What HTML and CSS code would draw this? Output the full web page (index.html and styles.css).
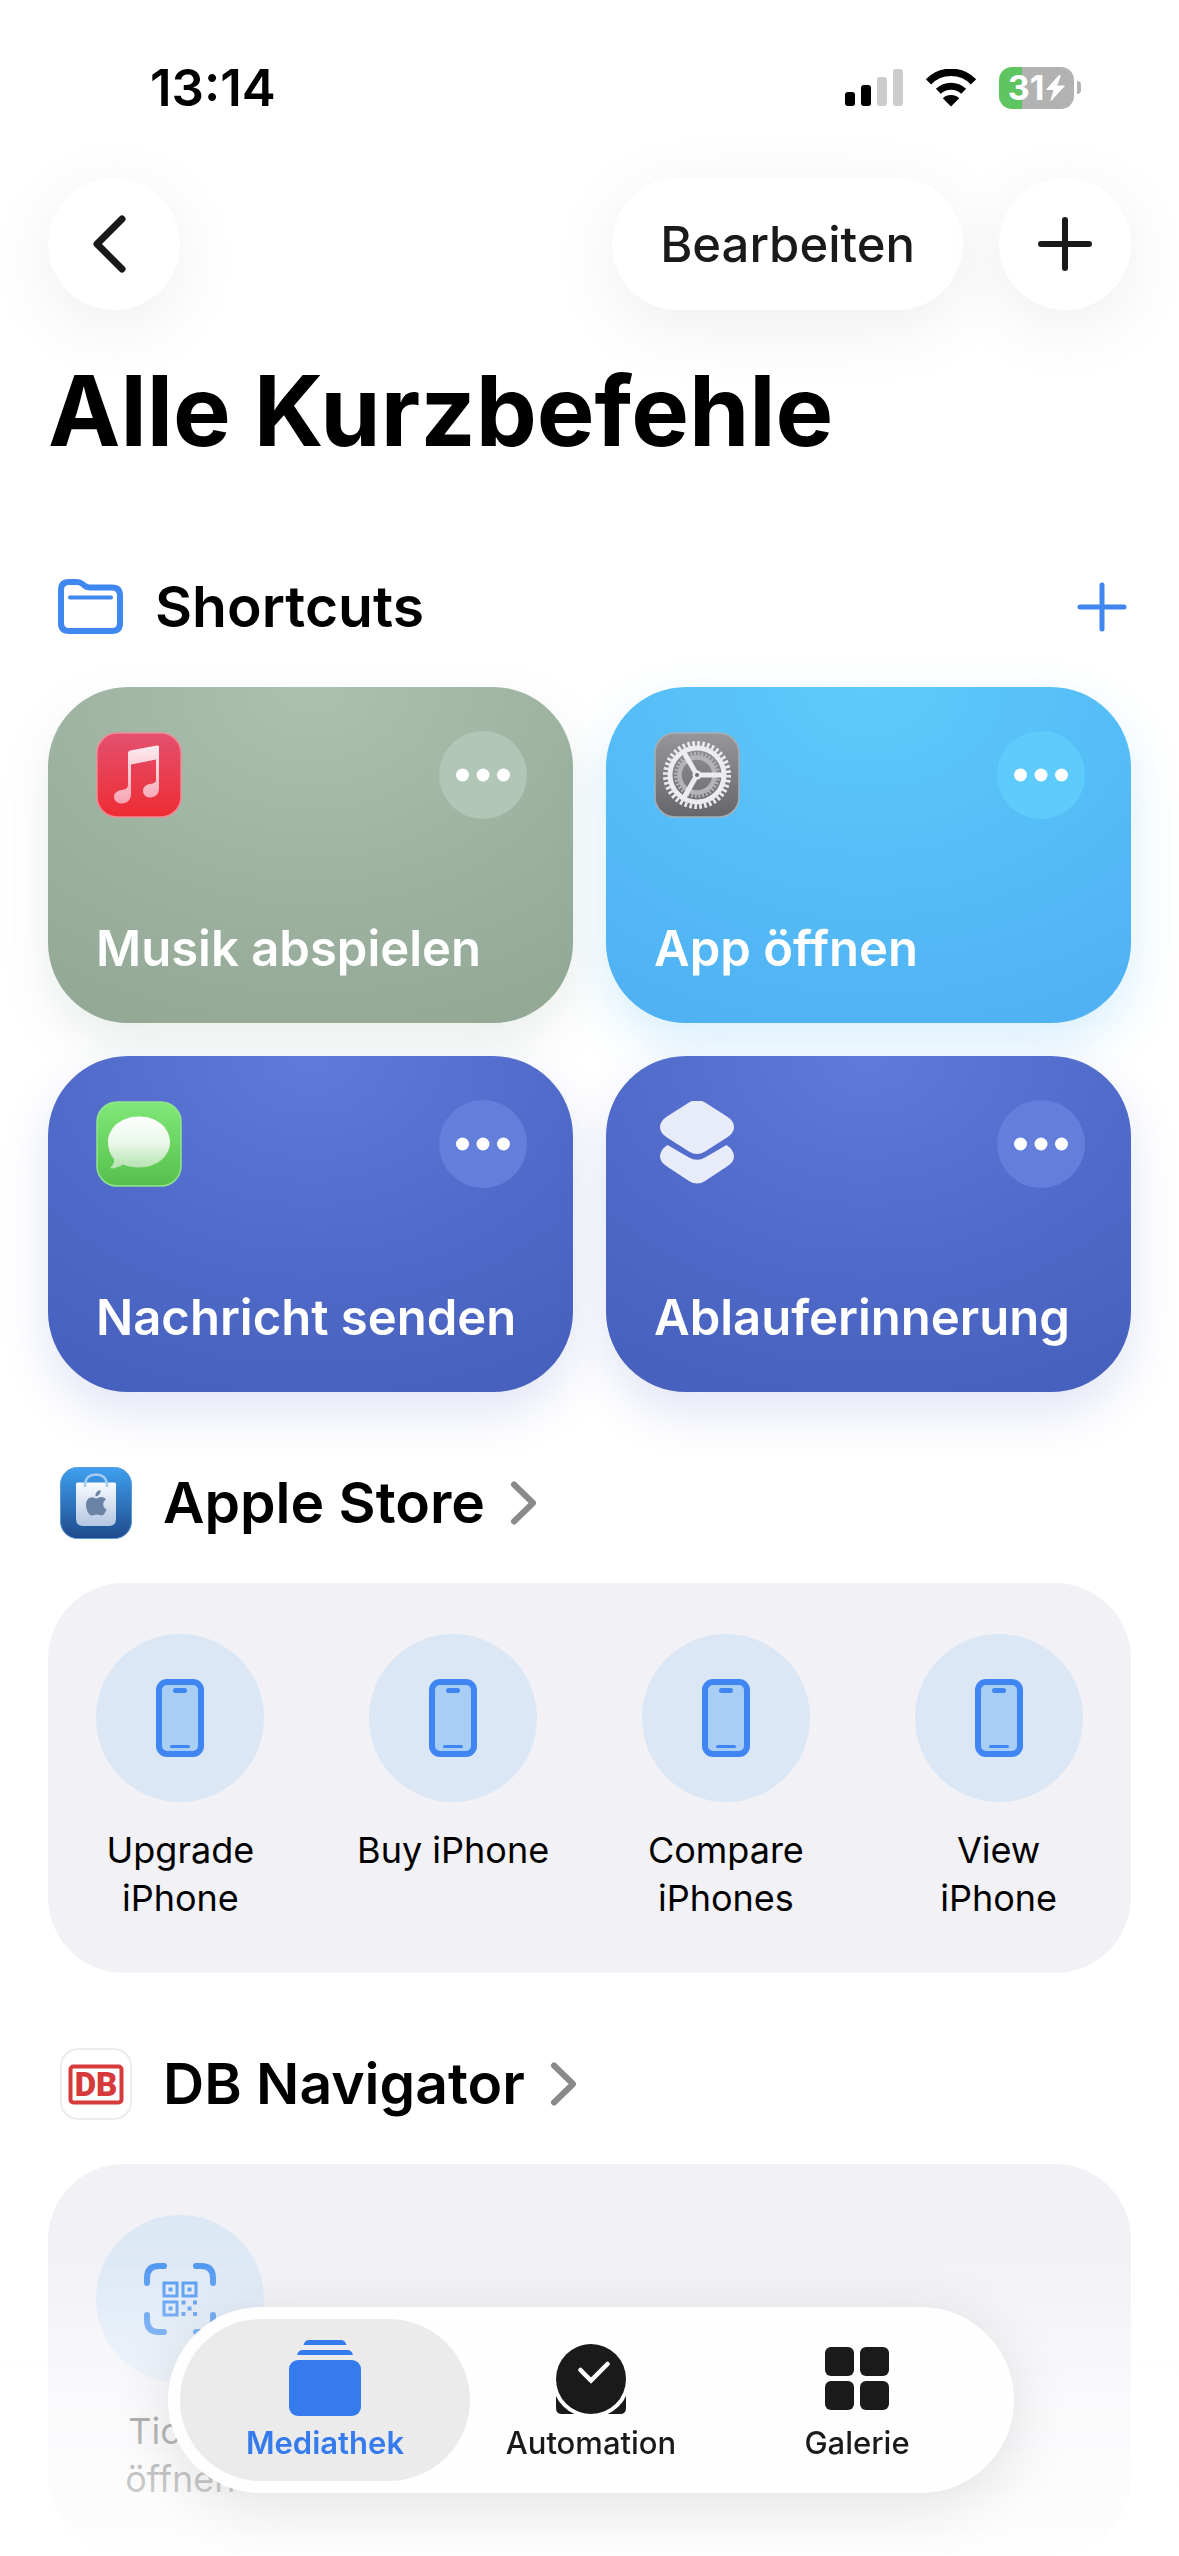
FILE: index.html
```html
<!DOCTYPE html>
<html lang="de">
<head>
<meta charset="utf-8">
<meta name="viewport" content="width=device-width, initial-scale=1">
<title>Alle Kurzbefehle</title>
<link rel="stylesheet" href="styles.css">
</head>
<body>
<svg class="defs" aria-hidden="true">
  <defs>
    <symbol id="phone" viewBox="0 0 48 78">
      <rect x="3" y="3" width="42" height="72" rx="8" fill="#a9cef6" stroke="#3f86f3" stroke-width="6"/>
      <rect x="17" y="9" width="14" height="5" rx="2.500" fill="#3f86f3"/>
      <rect x="14" y="66" width="20" height="3" rx="1.500" fill="#3f86f3"/>
    </symbol>
    <symbol id="chevron" viewBox="0 0 28 46">
      <path d="M4 4.500 23 23 4 41.500" fill="none" stroke="#8a8a8c" stroke-width="6" stroke-linecap="round" stroke-linejoin="round"/>
    </symbol>
    <symbol id="dots" viewBox="0 0 56 16">
      <circle cx="7.500" cy="8" r="6.500"/><circle cx="28" cy="8" r="6.500"/><circle cx="48.500" cy="8" r="6.500"/>
    </symbol>
  </defs>
</svg>

<header class="status">
  <time class="clock">13:14</time>
  <div class="indicators">
    <svg width="58" height="38" viewBox="0 0 58 38" aria-label="Mobilfunk">
      <rect x="0" y="23" width="10" height="14" rx="3"/>
      <rect x="16" y="16" width="10" height="21" rx="3"/>
      <rect x="32" y="8" width="10" height="29" rx="3" fill="#cbcbcb"/>
      <rect x="48" y="0" width="10" height="37" rx="3" fill="#cbcbcb"/>
    </svg>
    <svg width="52" height="38" viewBox="0 0 52 38" aria-label="WLAN">
      <path d="M26 37.500 17.800 29.300A12 12 0 0 1 34.200 29.300Z"/>
      <path d="M13.300 22.300A18.500 18.500 0 0 1 38.700 22.300" fill="none" stroke="#000" stroke-width="7"/>
      <path d="M3.500 12.800A31.500 31.500 0 0 1 48.500 12.800" fill="none" stroke="#000" stroke-width="7.500"/>
    </svg>
    <div class="battery">
      <span>31</span>
      <svg width="19" height="26" viewBox="0 0 19 26" aria-hidden="true"><path d="M13 0.500 0.800 14.500h7.400L5 25.500 18.400 11H10.500L14.300 1Z" fill="#fff" stroke="#fff" stroke-linejoin="round"/></svg>
    </div>
  </div>
</header>

<nav class="toolbar" aria-label="Werkzeuge">
  <button class="glass round back" aria-label="Zurück">
    <svg width="34" height="58" viewBox="0 0 34 58"><path d="M30 4 5 29 30 54" fill="none" stroke="#1a1a1a" stroke-width="7" stroke-linecap="round" stroke-linejoin="round"/></svg>
  </button>
  <button class="glass edit">Bearbeiten</button>
  <button class="glass round" aria-label="Neuer Kurzbefehl">
    <svg width="54" height="54" viewBox="0 0 54 54"><path d="M27 3V51M3 27H51" stroke="#1a1a1a" stroke-width="6" stroke-linecap="round"/></svg>
  </button>
</nav>

<main>
  <h1>Alle Kurzbefehle</h1>

  <section>
    <div class="section-head first">
      <svg width="66" height="56" viewBox="0 0 66 56" aria-hidden="true">
        <path d="M3 11Q3 3 11 3H19Q22 3 24.500 5L27 7Q29 8.500 32 8.500H54Q62 8.500 62 16.500V44Q62 52 54 52H11Q3 52 3 44Z" fill="none" stroke="#4087ef" stroke-width="6"/>
        <path d="M12 18.500H53" stroke="#4087ef" stroke-width="4" stroke-linecap="round"/>
      </svg>
      <h2>Shortcuts</h2>
      <button class="add" aria-label="Hinzufügen">
        <svg width="50" height="50" viewBox="0 0 50 50"><path d="M25 3V47M3 25H47" stroke="#3f86f0" stroke-width="5" stroke-linecap="round"/></svg>
      </button>
    </div>

    <div class="cards">
      <article class="card sage">
        <div class="card-top">
          <svg class="app" viewBox="0 0 86 86" aria-hidden="true">
            <defs>
              <linearGradient id="gm" x2="0" y2="1"><stop offset="0" stop-color="#e4506f"/><stop offset="1" stop-color="#ee2c33"/></linearGradient>
              <linearGradient id="gn" x2="0" y2="1"><stop offset="0" stop-color="#fdeaf0"/><stop offset="1" stop-color="#f7a5b2"/></linearGradient>
            </defs>
            <rect x="1" y="1" width="84" height="84" rx="20" fill="url(#gm)" stroke="#f08b96" stroke-width="1.500"/>
            <path fill="url(#gn)" d="M32 21Q32 19 34 18.500L61 13.500Q63 13 63 15V56C63 62 59.500 65.500 54 65.500C49.500 65.500 47 62.500 47 59C47 55 50 52.500 54 52C58 51.500 60 50.500 60 47V27.500L35 32.500V62C35 68 31 71.500 26 71.500C21 71.500 18 68.500 18 65C18 61 21.500 58.500 25.500 58C30 57.500 32 56 32 52.500Z"/>
          </svg>
          <button class="more" aria-label="Musik abspielen bearbeiten"><svg width="56" height="16"><use href="#dots"/></svg></button>
        </div>
        <a href="#musik">Musik abspielen</a>
      </article>

      <article class="card sky">
        <div class="card-top">
          <svg class="app" viewBox="0 0 86 86" aria-hidden="true">
            <defs>
              <linearGradient id="gs" x2="0" y2="1"><stop offset="0" stop-color="#96969b"/><stop offset="1" stop-color="#66666a"/></linearGradient>
            </defs>
            <rect x="1" y="1" width="84" height="84" rx="20" fill="url(#gs)" stroke="#a9adb2" stroke-width="1.500"/>
            <g fill="none" stroke="#b4b4b7">
              <circle cx="43" cy="43" r="17.500" stroke-width="4.500"/>
              <circle cx="43" cy="43" r="21" stroke-width="4" stroke-dasharray="1.900 1.768"/>
            </g>
            <g fill="none" stroke="#ececee">
              <circle cx="43" cy="43" r="27" stroke-width="5"/>
              <circle cx="43" cy="43" r="31.500" stroke-width="5" stroke-dasharray="2.600 2.348"/>
              <path d="M43 43H69M43 43 30 20.500M43 43 30 65.500" stroke-width="5"/>
            </g>
            <circle cx="43" cy="43" r="4.500" fill="#ececee"/><circle cx="43" cy="43" r="2" fill="#6f6f73"/>
          </svg>
          <button class="more" aria-label="App öffnen bearbeiten"><svg width="56" height="16"><use href="#dots"/></svg></button>
        </div>
        <a href="#app">App öffnen</a>
      </article>

      <article class="card indigo">
        <div class="card-top">
          <svg class="app" viewBox="0 0 86 86" aria-hidden="true">
            <defs>
              <linearGradient id="gg" x2="0" y2="1"><stop offset="0" stop-color="#7fe878"/><stop offset="1" stop-color="#57c04c"/></linearGradient>
              <linearGradient id="gb" x2="0" y2="1"><stop offset="0" stop-color="#fff"/><stop offset=".5" stop-color="#eaf7e9"/><stop offset="1" stop-color="#b4e3af"/></linearGradient>
            </defs>
            <rect x="1" y="1" width="84" height="84" rx="20" fill="url(#gg)" stroke="#93e58d" stroke-width="1.500"/>
            <path fill="url(#gb)" d="M43 15.500C60.500 15.500 74 26.500 74 41S60.500 66.500 43 66.500C37 66.500 31.500 65.500 27 63.500C23 66 19.500 67.300 15.500 67.500C14.500 67.500 14.500 66.500 15 66C17.500 63.500 18.500 60.500 18 58C14 53.500 12 48 12 41C12 26.500 25.500 15.500 43 15.500Z"/>
          </svg>
          <button class="more" aria-label="Nachricht senden bearbeiten"><svg width="56" height="16"><use href="#dots"/></svg></button>
        </div>
        <a href="#nachricht">Nachricht senden</a>
      </article>

      <article class="card indigo">
        <div class="card-top">
          <svg class="app" viewBox="0 0 86 86" aria-hidden="true" fill="#e8ebf8">
            <path d="M35 1.500Q43-3.500 51 1.500L73 15.500Q80 20 80 26T73 36.500L51 50.500Q43 55.500 35 50.500L13 36.500Q6 32 6 26T13 15.500Z"/>
            <path d="M13.500 44 35 56.500Q43 61 51 56.500L72.500 44Q80 49 80 55.500Q80 61 73 65.500L51 80Q43 85 35 80L13 65.500Q6 61 6 55.500Q6 49 13.500 44Z"/>
          </svg>
          <button class="more" aria-label="Ablauferinnerung bearbeiten"><svg width="56" height="16"><use href="#dots"/></svg></button>
        </div>
        <a href="#ablauf">Ablauferinnerung</a>
      </article>
    </div>
  </section>

  <section>
    <a class="section-head" href="#apple-store">
      <svg width="72" height="72" viewBox="0 0 72 72" aria-hidden="true">
        <defs>
          <linearGradient id="ga" x2="0" y2="1"><stop offset="0" stop-color="#3fa0f0"/><stop offset="1" stop-color="#1f4a8c"/></linearGradient>
          <linearGradient id="gw" x2="0" y2="1"><stop offset="0" stop-color="#fafcff"/><stop offset="1" stop-color="#b3c6e2"/></linearGradient>
        </defs>
        <rect x=".5" y=".5" width="71" height="71" rx="17" fill="url(#ga)" stroke="#5a97d6"/>
        <path d="M16 17Q16 15.500 17.500 15.500H54.500Q56 15.500 56 17V52Q56 59 49 59H23Q16 59 16 52Z" fill="url(#gw)"/>
        <path d="M25 20V17Q26 7.500 36 7.500T47 17V20" fill="none" stroke="#a5cdf3" stroke-width="2.500"/>
        <path fill="#6b83a5" d="M40.500 23C41 26.500 38.500 29.500 35.500 29.500C35 26 37.500 23.500 40.500 23ZM36 31.500C37.500 31.500 39 30 41.500 30C43.500 30 45 31 46 32.500C42 35 42.500 40.500 46.500 42.500C45.500 45.500 43.500 48.500 41.500 48.500C39.500 48.500 39 47.500 36.500 47.500C34.500 47.500 33.500 48.500 32 48.500C28.500 48.500 26 42.500 26 38C26 33 29 30.300 32 30.300C34 30.300 35 31.500 36 31.500Z"/>
      </svg>
      <h2>Apple Store</h2>
      <svg class="chevron" width="28" height="46" aria-hidden="true"><use href="#chevron"/></svg>
    </a>
    <div class="panel">
      <button class="action"><span class="disc"><svg width="48" height="78"><use href="#phone"/></svg></span>Upgrade iPhone</button>
      <button class="action"><span class="disc"><svg width="48" height="78"><use href="#phone"/></svg></span>Buy iPhone</button>
      <button class="action"><span class="disc"><svg width="48" height="78"><use href="#phone"/></svg></span>Compare iPhones</button>
      <button class="action"><span class="disc"><svg width="48" height="78"><use href="#phone"/></svg></span>View iPhone</button>
    </div>
  </section>

  <section>
    <a class="section-head" href="#db-navigator">
      <svg width="72" height="72" viewBox="0 0 72 72" aria-label="DB">
        <rect x="1" y="1" width="70" height="70" rx="17" fill="#fff" stroke="#ededed" stroke-width="2"/>
        <rect x="10.500" y="18.500" width="51" height="36" rx="3" fill="#fff" stroke="#d63a3a" stroke-width="4"/>
        <text class="db" x="36" y="48" text-anchor="middle">DB</text>
      </svg>
      <h2>DB Navigator</h2>
      <svg class="chevron" width="28" height="46" aria-hidden="true"><use href="#chevron"/></svg>
    </a>
    <div class="panel">
      <button class="action"><span class="disc">
        <svg width="72" height="72" viewBox="0 0 72 72" fill="none" stroke="#3f8df0">
          <path d="M3 20V15Q3 3 15 3H20M52 3H57Q69 3 69 15V20M69 52V57Q69 69 57 69H52M20 69H15Q3 69 3 57V52" stroke-width="6" stroke-linecap="round"/>
          <g stroke-width="3"><rect x="20" y="20" width="13" height="13"/><rect x="39" y="20" width="13" height="13"/><rect x="20" y="39" width="13" height="13"/></g>
          <g fill="#3f8df0" stroke="none"><path d="M24.500 24.500h4v4h-4zM43.500 24.500h4v4h-4zM24.500 43.500h4v4h-4zM37.500 37.500h4v4h-4zM49 37.500h4v4h-4zM43.500 43.500h4v4h-4zM37.500 49h4v4h-4zM49 49h4v4h-4z"/></g>
        </svg></span>Ticket öffnen</button>
    </div>
  </section>
</main>

<div class="fade"></div>
<nav class="tabs" aria-label="Bereiche">
  <a class="tab active" href="#mediathek">
    <svg width="74" height="78" viewBox="0 0 74 78" fill="currentColor" aria-hidden="true">
      <path d="M15.500 6Q17 1 21 1H53Q57 1 58.500 6ZM9 16Q10.500 11 14.500 11H59.500Q63.500 11 65 16Z"/>
      <rect x="1" y="21" width="72" height="56" rx="9"/>
    </svg>
    Mediathek
  </a>
  <a class="tab" href="#automation">
    <svg width="74" height="78" viewBox="0 0 74 78" aria-hidden="true">
      <path d="M2 57V69Q2 75 8 75H66Q72 75 72 69V57Z" fill="#1a1a1a"/>
      <circle cx="37" cy="40" r="39" fill="#fff"/>
      <circle cx="37" cy="40" r="35" fill="#1a1a1a"/>
      <path d="M26.500 31 37 41.500 53.500 25" fill="none" stroke="#fff" stroke-width="4.500" stroke-linecap="round"/>
    </svg>
    Automation
  </a>
  <a class="tab" href="#galerie">
    <svg width="74" height="78" viewBox="0 0 74 78" fill="#1a1a1a" aria-hidden="true">
      <rect x="5" y="8" width="29" height="29" rx="6"/><rect x="40" y="8" width="29" height="29" rx="6"/>
      <rect x="5" y="42" width="29" height="29" rx="6"/><rect x="40" y="42" width="29" height="29" rx="6"/>
    </svg>
    Galerie
  </a>
</nav>
</body>
</html>
```
FILE: styles.css
```css
* { box-sizing: border-box; }

body {
  margin: 0;
  background: #fff;
  color: #000;
  font-family: Inter, "Liberation Sans", sans-serif;
}

h1, h2 { margin: 0; }

a { color: inherit; text-decoration: none; }

button {
  padding: 0;
  border: 0;
  background: none;
  color: inherit;
  font: inherit;
}

svg { display: block; flex: none; }

.defs { position: absolute; width: 0; height: 0; }

/* Status bar */
.status {
  display: flex;
  align-items: center;
  justify-content: space-between;
  padding: 52px 98px 0 150px;
}

.clock {
  font-size: 51px;
  font-weight: 600;
  line-height: 72px;
}

.indicators {
  display: flex;
  align-items: center;
  gap: 22px;
}

.battery {
  position: relative;
  display: flex;
  align-items: center;
  justify-content: center;
  gap: 2px;
  width: 75px;
  height: 42px;
  margin-right: 7px;
  border-radius: 13px;
  background: linear-gradient(90deg, #5fc560 31%, #b2b2b2 31%);
  color: #fff;
  font-size: 34px;
  font-weight: 700;
  line-height: 42px;
}

.battery::after {
  content: "";
  position: absolute;
  left: 78px;
  top: 14px;
  width: 4px;
  height: 13px;
  border-radius: 0 6px 6px 0;
  background: #b2b2b2;
}

/* Toolbar */
.toolbar {
  display: flex;
  align-items: center;
  gap: 36px;
  padding: 54px 48px 0;
}

.glass {
  display: flex;
  align-items: center;
  justify-content: center;
  height: 132px;
  border-radius: 66px;
  background: #fff;
  box-shadow: 0 16px 72px rgba(0, 0, 0, .07);
  color: #1a1a1a;
}

.round { width: 132px; }

.back {
  margin-right: auto;
  padding-right: 10px;
}

.edit {
  padding: 0 48px;
  font-size: 49px;
  font-weight: 500;
}

/* Content */
main { padding: 0 48px; }

h1 {
  padding-top: 41px;
  font-size: 97px;
  font-weight: 700;
  line-height: 120px;
}

h2 {
  font-size: 57px;
  font-weight: 600;
  line-height: 72px;
}

.section-head {
  display: flex;
  align-items: center;
  gap: 31px;
  padding: 75px 0 44px 12px;
}

.first {
  padding-top: 100px;
  padding-left: 10px;
}

.add {
  margin-left: auto;
  padding-right: 4px;
}

.chevron { margin-left: -6px; }

.db {
  fill: #d63a3a;
  font: 900 33px Roboto, sans-serif;
}

/* Shortcut cards */
.cards {
  display: grid;
  grid-template-columns: 1fr 1fr;
  gap: 33px;
}

.card {
  display: flex;
  flex-direction: column;
  justify-content: space-between;
  height: 336px;
  padding: 44px 46px 44px 48px;
  border-radius: 80px;
  color: #fff;
  font-size: 49px;
  font-weight: 600;
  line-height: 60px;
}

.card-top {
  display: flex;
  align-items: center;
  justify-content: space-between;
}

.app { width: 86px; height: 86px; }

.more {
  display: flex;
  align-items: center;
  justify-content: center;
  width: 88px;
  height: 88px;
  border-radius: 50%;
  fill: #fff;
}

.sage {
  background: radial-gradient(ellipse 110% 130% at 50% 0, #acc2b1, #9cb19f 50%, #8fa592);
  box-shadow: 0 20px 48px rgba(120, 150, 130, .16);
}
.sage .more { background: #b0c6b6; }

.sky {
  background: radial-gradient(ellipse 110% 130% at 50% 0, #5dcafb, #54bbf6 50%, #4eacf1);
  box-shadow: 0 20px 48px rgba(78, 180, 240, .22);
}
.sky .more { background: #5ecbfd; }

.indigo {
  background: radial-gradient(ellipse 110% 130% at 50% 0, #6079da, #4f69c8 50%, #435cb8);
  box-shadow: 0 20px 48px rgba(70, 95, 190, .16);
}
.indigo .more { background: #647edb; }

/* App action panels */
.panel {
  display: grid;
  grid-template-columns: repeat(4, 1fr);
  align-items: start;
  gap: 72px;
  min-height: 390px;
  padding: 51px 32px;
  border-radius: 76px;
  background: #f1f1f6;
}

.action {
  display: flex;
  flex-direction: column;
  align-items: center;
  gap: 24px;
  font-size: 36px;
  line-height: 48px;
}

.disc {
  display: flex;
  align-items: center;
  justify-content: center;
  width: 168px;
  height: 168px;
  border-radius: 50%;
  background: #dbe7f5;
}

/* Tab bar over faded content */
.fade {
  position: fixed;
  inset: auto 0 0;
  height: 376px;
  background: linear-gradient(
    rgba(255, 255, 255, 0),
    rgba(255, 255, 255, .1) 22%,
    rgba(255, 255, 255, .35) 40%,
    rgba(255, 255, 255, .68) 62%,
    rgba(255, 255, 255, .78) 80%,
    rgba(255, 255, 255, .9)
  );
  pointer-events: none;
}

.tabs {
  position: fixed;
  bottom: 63px;
  left: 168px;
  right: 165px;
  display: flex;
  padding: 12px;
  border-radius: 94px;
  background: #fefefe;
  box-shadow: 0 12px 64px rgba(0, 0, 0, .11);
}

.tab {
  display: flex;
  flex: 1 1 0;
  flex-direction: column;
  align-items: center;
  gap: 8px;
  height: 162px;
  padding-top: 20px;
  border-radius: 81px;
  color: #1a1a1a;
  font-size: 31px;
  font-weight: 500;
  line-height: 36px;
}

.tab + .tab { margin-left: -24px; }

.active {
  background: #ebebec;
  color: #367bee;
  font-weight: 600;
}
```
